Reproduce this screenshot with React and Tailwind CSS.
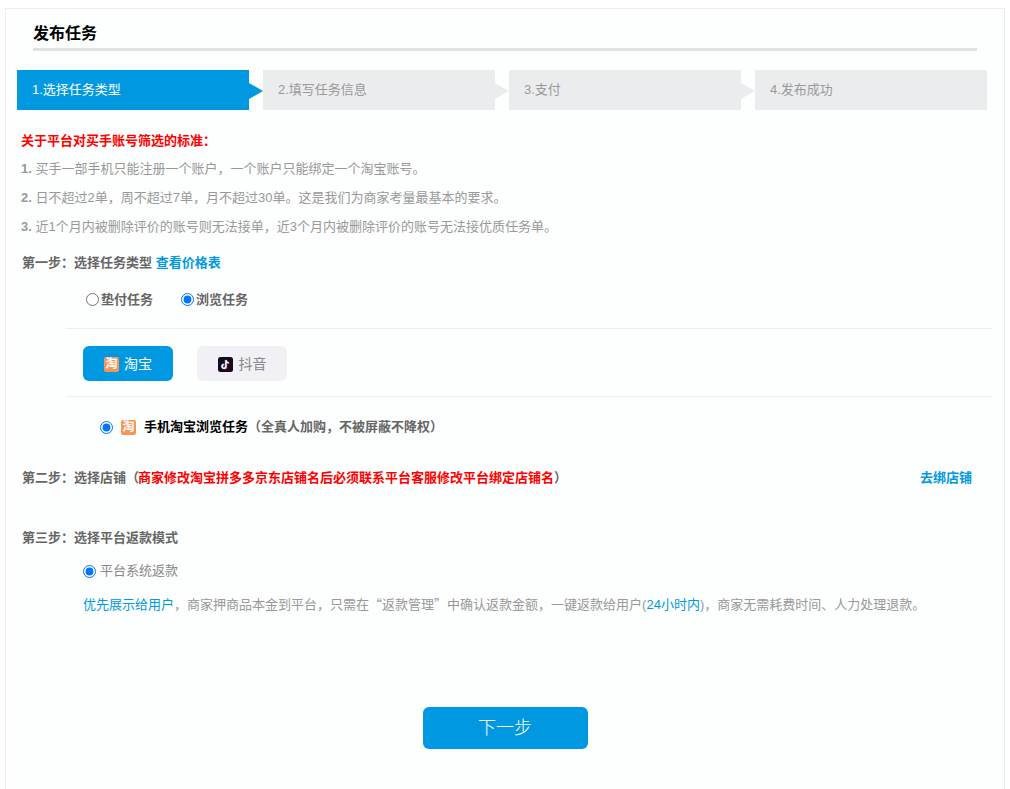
import React from "react";

const steps = ["1.选择任务类型", "2.填写任务信息", "3.支付", "4.发布成功"];

const rules = [
  "买手一部手机只能注册一个账户，一个账户只能绑定一个淘宝账号。",
  "日不超过2单，周不超过7单，月不超过30单。这是我们为商家考量最基本的要求。",
  "近1个月内被删除评价的账号则无法接单，近3个月内被删除评价的账号无法接优质任务单。",
];

const TaobaoIcon = () => (
  <span className="flex h-[15px] w-[15px] shrink-0 items-center justify-center rounded-[2px] bg-[#f89458] text-[12px] font-bold leading-none text-white">
    淘
  </span>
);

const DouyinIcon = () => (
  <svg viewBox="0 0 15 15" className="h-[15px] w-[15px] shrink-0">
    <rect width="15" height="15" rx="2.5" fill="#160b1e" />
    <path d="M8 3.2v6.2a1.9 1.9 0 1 1-1.9-1.9M8 3.2c.2 1.5 1.2 2.5 2.8 2.7" fill="none" stroke="#25f4ee" strokeWidth="1.4" transform="translate(-.5 -.3)" />
    <path d="M8 3.2v6.2a1.9 1.9 0 1 1-1.9-1.9M8 3.2c.2 1.5 1.2 2.5 2.8 2.7" fill="none" stroke="#fe2c55" strokeWidth="1.4" transform="translate(.5 .3)" />
    <path d="M8 3.2v6.2a1.9 1.9 0 1 1-1.9-1.9M8 3.2c.2 1.5 1.2 2.5 2.8 2.7" fill="none" stroke="#fff" strokeWidth="1.2" />
  </svg>
);

const Radio = ({ checked, className = "" }) => (
  <input type="radio" checked={checked} readOnly className={`m-0 h-[13px] w-[13px] shrink-0 ${className}`} />
);

const App = () => {
  return (
    <div className="h-[789px] overflow-hidden bg-white font-['Liberation_Sans','Noto_Sans_CJK_SC',sans-serif] text-[13px] text-[#999]">
      <div className="ml-[5px] mt-[8px] h-[800px] w-[1000px] border border-[#eeeeee] bg-[#fdfefe]">
        {/* 标题 */}
        <div className="mx-[27px] h-[42px] border-b-[3px] border-[#e0e1e3] pt-[13px] text-[16px] font-bold leading-[24px] text-black">
          发布任务
        </div>

        {/* 步骤条 */}
        <div className="ml-[11px] mt-[19px] flex gap-[14px]">
          {steps.map((step, i) => (
            <div
              key={step}
              className={`relative h-[40px] w-[232px] pl-[15px] leading-[40px] ${
                i === 0 ? "bg-[#0099e1] text-white" : "bg-[#ebecee] text-[#999]"
              }`}
            >
              {step}
              {i < 3 && (
                <span
                  className={`absolute left-full top-[13px] h-0 w-0 border-y-[8px] border-l-[14px] border-y-transparent ${
                    i === 0 ? "border-l-[#0099e1]" : "border-l-[#ebecee]"
                  }`}
                />
              )}
            </div>
          ))}
        </div>

        {/* 筛选标准 */}
        <div className="ml-[15px] mt-[16px] text-[13px] font-bold leading-[29px] text-[#ff0000]">关于平台对买手账号筛选的标准：</div>
        <div className="-mt-px ml-[15px]">
          {rules.map((rule, i) => (
            <p key={rule} className="leading-[29px]">
              <b>{i + 1}.</b> {rule}
            </p>
          ))}
        </div>

        {/* 第一步 */}
        <div className="ml-[16px] mt-[7px] font-bold leading-[29px] text-[#666]">
          第一步：选择任务类型 <span className="text-[#0099e1]">查看价格表</span>
        </div>
        <div className="ml-[80px] mt-[8px] flex h-[29px] items-center font-bold text-[#666]">
          <Radio checked={false} />
          <span className="ml-[2px]">垫付任务</span>
          <Radio checked className="ml-[28px]" />
          <span className="ml-[2px]">浏览任务</span>
        </div>
        <div className="ml-[60px] mr-[12px] mt-[14px] border-t border-[#eeeeee]" />
        <div className="ml-[77px] mt-[17px] flex gap-[24px] text-[14px] leading-[22px]">
          <div className="flex h-[35px] w-[90px] items-center justify-center gap-[5px] rounded-[6px] bg-[#0099e1] pt-px text-white">
            <TaobaoIcon />
            淘宝
          </div>
          <div className="flex h-[35px] w-[90px] items-center justify-center gap-[6px] rounded-[6px] bg-[#f0f0f5] pt-px text-[#888]">
            <DouyinIcon />
            抖音
          </div>
        </div>
        <div className="ml-[60px] mr-[12px] mt-[15px] border-t border-[#eeeeee]" />
        <div className="ml-[94px] mt-[22px] flex h-[16px] items-center font-bold text-[#666]">
          <Radio checked />
          <span className="ml-[8px]">
            <TaobaoIcon />
          </span>
          <span className="ml-[8px] text-black">手机淘宝浏览任务</span>
          <span>（全真人加购，不被屏蔽不降权）</span>
        </div>

        {/* 第二步 */}
        <div className="ml-[16px] mr-[32px] mt-[33px] flex h-[20px] items-center justify-between font-bold text-[#666]">
          <span>
            第二步：选择店铺（<span className="-ml-px text-[#ff0000]">商家修改淘宝拼多多京东店铺名后必须联系平台客服修改平台绑定店铺名</span>）
          </span>
          <span className="text-[#0099e1]">去绑店铺</span>
        </div>

        {/* 第三步 */}
        <div className="ml-[16px] mt-[40px] h-[20px] font-bold leading-[20px] text-[#666]">第三步：选择平台返款模式</div>
        <div className="ml-[77px] mt-[13px] flex h-[20px] items-center text-[#888]">
          <Radio checked />
          <span className="ml-[4px]">平台系统返款</span>
        </div>
        <p className="ml-[77px] mt-[13px] leading-[20px]">
          <span className="text-[#0099e1]">优先展示给用户</span>，商家押商品本金到平台，只需在<span className="font-['Noto_Sans_CJK_SC',sans-serif]">“</span>返款管理<span className="font-['Noto_Sans_CJK_SC',sans-serif]">”</span>中确认返款金额，一键返款给用户(<span className="text-[#0099e1]">24小时内</span>)，商家无需耗费时间、人力处理退款。
        </p>

        {/* 下一步 */}
        <div className="mt-[92px] flex justify-center">
          <button className="h-[42px] w-[165px] rounded-[6px] bg-[#0099e1] text-[18px] font-light text-white">下一步</button>
        </div>
      </div>
    </div>
  );
};

export default App;
